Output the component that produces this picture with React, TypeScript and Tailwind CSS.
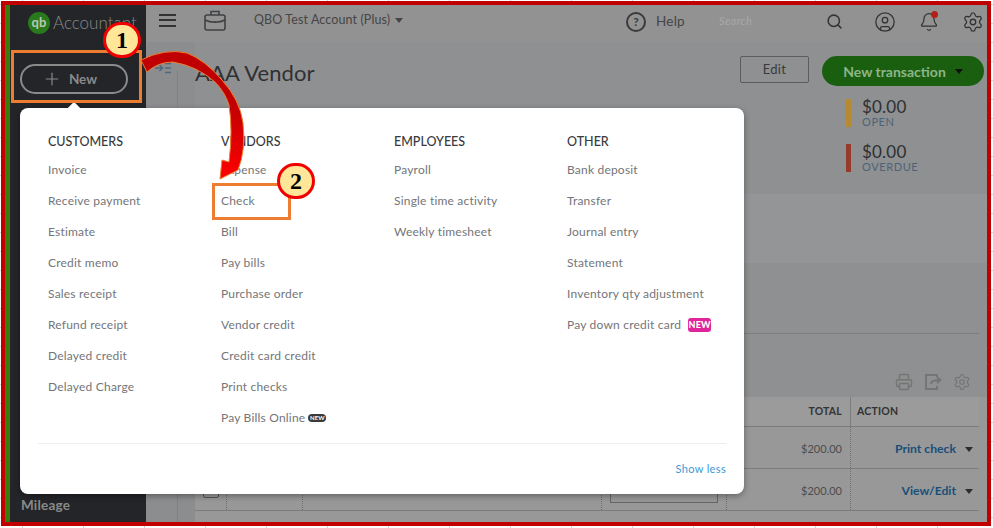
import { CircleUser, Bell, Printer, Settings, Search, Plus } from "lucide-react"

const columns = [
    {
        title: "CUSTOMERS",
        items: ["Invoice", "Receive payment", "Estimate", "Credit memo", "Sales receipt", "Refund receipt", "Delayed credit", "Delayed Charge"],
    },
    {
        title: "VENDORS",
        items: ["Expense", "Check", "Bill", "Pay bills", "Purchase order", "Vendor credit", "Credit card credit", "Print checks", "Pay Bills Online"],
    },
    {
        title: "EMPLOYEES",
        items: ["Payroll", "Single time activity", "Weekly timesheet"],
    },
    {
        title: "OTHER",
        items: ["Bank deposit", "Transfer", "Journal entry", "Statement", "Inventory qty adjustment", "Pay down credit card"],
    },
]

function Caret({ className }: { className: string }) {
    return <span className={`inline-block w-0 h-0 border-x-[4px] border-x-transparent border-t-[5px] ${className}`} />
}

function Callout({ label, className }: { label: string; className: string }) {
    return (
        <div className={`absolute flex items-center justify-center rounded-full border-[3px] border-[#f00000] bg-[#ffe699] text-black font-bold text-[24px] font-['Liberation_Serif',serif] ${className}`}>
            {label}
        </div>
    )
}

function Header() {
    return (
        <header className="h-[37px] pb-[4px] bg-[#929292] flex items-center text-[#454545] shrink-0 whitespace-nowrap">
            <div className="ml-[13px] -mt-[3px] w-[17px] flex flex-col gap-[3.5px]">
                <span className="h-[2px] bg-[#333]" />
                <span className="h-[2px] bg-[#333]" />
                <span className="h-[2px] bg-[#333]" />
            </div>
            <svg className="ml-[28px] -mt-[2px]" width="22" height="21" viewBox="0 0 22 21" fill="none" stroke="#3f4144" strokeWidth="1.6">
                <rect x="1" y="5" width="20" height="15" rx="2" />
                <path d="M7 5V1.5h8V5M1 10c5 3 15 3 20 0M11 11v2" />
            </svg>
            <span className="ml-[28px] -mt-[3px] w-[136px] text-[12.5px] tracking-[0.1px]">QBO Test Account (Plus)</span>
            <Caret className="ml-[5px] -mt-[3px] border-t-[#454545]" />
            <div className="ml-[223px] w-[20px] h-[20px] rounded-full border-2 border-[#3a3a3a] flex items-center justify-center text-[12px] font-bold text-[#3a3a3a]">?</div>
            <span className="ml-[10px] w-[28px] text-[13.5px] tracking-[0.2px]">Help</span>
            <span className="ml-[35px] w-[34px] text-[11px] italic text-[#a8a8a8] tracking-[0.4px]">Search</span>
            <Search className="ml-[73px] text-[#333]" size={17} strokeWidth={2.2} />
            <CircleUser className="ml-[31px] text-[#333]" size={22} strokeWidth={1.4} />
            <div className="relative ml-[23px]">
                <Bell className="text-[#333]" size={20} strokeWidth={1.5} />
                <span className="absolute -top-[1px] right-[1px] w-[7px] h-[7px] rounded-full bg-[#b3201a]" />
            </div>
            <Settings className="ml-[23px] text-[#333]" size={22} strokeWidth={1.4} />
        </header>
    )
}

function Balance({ amount, label, barColor }: { amount: string; label: string; barColor: string }) {
    return (
        <div className="flex gap-[11px] h-[28px]">
            <span className={`w-[5px] h-[28px] ${barColor}`} />
            <div className="-mt-[2px] flex flex-col">
                <span className="text-[17px] leading-[20px] text-[#2e2f31] tracking-[0.2px]">{amount}</span>
                <span className="-mt-[1px] text-[11px] leading-[11px] text-[#4b6479] tracking-[0.6px]">{label}</span>
            </div>
        </div>
    )
}

function TableRow({ action, last }: { action: string; last?: boolean }) {
    const cell = "h-full border-r border-dotted border-[#6f6f6f] flex items-center justify-center"
    return (
        <div className="h-[42px] flex border-b border-[#7c7c7c] text-[#4c4c4c]">
            <div className={`w-[32px] ${cell}`}>
                <span className="w-[16px] h-[16px] border border-[#555] rounded-[2px]" />
            </div>
            <div className={`w-[76px] ${cell}`} />
            <div className={`w-[299px] ${cell}`} />
            <div className={`w-[125px] ${cell}`}>
                {last && <span className="w-[108px] h-[26px] border border-[#666]" />}
            </div>
            <div className="flex-1 pt-[3px] flex items-center justify-end pr-[8px] text-[11px] border-r border-dotted border-[#6f6f6f]">$200.00</div>
            <div className="w-[128px] pt-[3px] flex items-center justify-end pr-[6px] gap-[9px] text-[12.2px] font-bold text-[#174f78]">
                {action}
                <Caret className="border-t-[#2c2c2c]" />
            </div>
        </div>
    )
}

function PageBody() {
    return (
        <div className="flex-1 flex min-h-0 bg-[#8f9091]">
            <div className="w-[49px] shrink-0 bg-[#8c8d8f] pt-[20px]">
                <svg className="ml-[9px]" width="16" height="12" viewBox="0 0 16 12" fill="none" stroke="#4d6980" strokeWidth="1.6">
                    <path d="M0 6h7M4.5 3L7.5 6 4.5 9M10 1.5h6M10 6h6M10 10.5h6" />
                </svg>
                <span className="block ml-[31px] -mt-[4px] w-px h-[460px] bg-[#80818a]" />
            </div>
            <div className="flex-1 flex flex-col min-w-0">
                <div className="h-[152px] pt-[14px] pr-[3px] flex justify-between">
                    <h1 className="-mt-[1px] text-[22px] leading-[36px] tracking-[0.1px] text-[#2f3033]">AAA Vendor</h1>
                    <div className="flex gap-[13px] items-start">
                        <div className="w-[69px] h-[27px] border border-[#5c5c5c] rounded-[2px] flex items-center justify-center text-[13px] text-[#3a3a3a] tracking-[0.3px]">Edit</div>
                        <div className="w-[162px]">
                            <div className="h-[30px] rounded-full bg-[#1a5f10] flex items-center justify-center gap-[9px] text-[14px] font-bold text-[#8db588]">
                                New transaction
                                <Caret className="border-t-[#111]" />
                            </div>
                            <div className="ml-[24px] mt-[13px] flex flex-col gap-[17px]">
                                <Balance amount="$0.00" label="OPEN" barColor="bg-[#b58a33]" />
                                <Balance amount="$0.00" label="OVERDUE" barColor="bg-[#963a2a]" />
                            </div>
                        </div>
                    </div>
                </div>
                <div className="h-[69px] bg-[#949596]" />
                <div className="h-[71px] border-b border-[#7d7e7f] mr-[8px]" />
                <div className="h-[63px] flex items-end justify-end gap-[11px] pb-[6px] pr-[16px] text-[#757575]">
                    <Printer size={18} strokeWidth={2} />
                    <svg width="18" height="18" viewBox="0 0 18 18" fill="none" stroke="#757575" strokeWidth="2">
                        <path d="M13 13v3H2V2h11v2M7 11c0-3 3-4 9-4M13 4l3.5 3L13 10" />
                    </svg>
                    <Settings size={18} strokeWidth={1.6} />
                </div>
                <div className="flex-1 bg-[#989898] pr-[8px]">
                    <div className="h-[30px] flex border-b border-[#7c7c7c] bg-[#9b9b9b] text-[10.5px] font-bold text-[#333]">
                        <div className="flex-1 flex items-center justify-end pr-[8px] border-r border-[#7c7c7c] tracking-[0.2px]">TOTAL</div>
                        <div className="w-[128px] flex items-center pl-[6px] tracking-[0.2px]">ACTION</div>
                    </div>
                    <TableRow action="Print check" />
                    <TableRow action="View/Edit" last />
                </div>
            </div>
        </div>
    )
}

function NewMenu() {
    return (
        <div className="absolute left-[15px] top-[103px] w-[724px] h-[386px] bg-white rounded-[8px] shadow-[0_2px_6px_rgba(0,0,0,0.35)] text-[#747579]">
            <span className="absolute left-[49px] -top-[4px] w-[10px] h-[10px] bg-white rotate-45 rounded-[2px]" />
            <div className="flex h-[335px] pl-[28px] pt-[25px]">
                {columns.map((col) => (
                    <div key={col.title} className="w-[173px]">
                        <h3 className="h-[18px] leading-[18px] text-[12.5px] font-medium text-[#393a3d]">{col.title}</h3>
                        <ul className="mt-[3px]">
                            {col.items.map((item) => (
                                <li key={item} className="h-[31px] flex items-center text-[12px] tracking-[0.2px]">
                                    {item}
                                    {item === "Pay down credit card" && (
                                        <span className="ml-[7px] w-[23px] h-[14px] rounded-[3px] bg-[#e0249a] text-white text-[9px] font-black flex items-center justify-center">NEW</span>
                                    )}
                                    {item === "Pay Bills Online" && (
                                        <span className="ml-[3px] w-[18px] h-[8px] rounded-full bg-[#393a3d] text-white text-[6px] font-bold flex items-center justify-center">NEW</span>
                                    )}
                                </li>
                            ))}
                        </ul>
                    </div>
                ))}
            </div>
            <div className="mx-[18px] border-t border-[#eeeeee] flex justify-end pt-[18px]">
                <span className="text-[11px] leading-[14px] text-[#3d9ad6] tracking-[0.35px]">Show less</span>
            </div>
        </div>
    )
}

function Annotations() {
    return (
        <>
            <div className="absolute left-[6px] top-[45px] w-[131px] h-[53px] border-[3px] border-[#ed7d31]" />
            <div className="absolute left-[207px] top-[178px] w-[79px] h-[37px] border-[3px] border-[#ed7d31]" />
            <svg className="absolute left-0 top-0" width="982" height="517" viewBox="5 5 982 517" fill="none">
                <defs>
                    <linearGradient id="arrowFill" x1="0" y1="0" x2="0" y2="1">
                        <stop offset="0.4" stopColor="#c00000" />
                        <stop offset="1" stopColor="#ff0000" />
                    </linearGradient>
                </defs>
                <path
                    d="M141 60Q165 48 187 53Q205 60 222 80Q240 100 243 123Q246 150 238 170L220 179L222 160L229 162Q233 130 229 105Q225 92 215 82Q197 66 173 62Q158 62 147 72Z"
                    fill="url(#arrowFill)"
                    stroke="#ed7d31"
                    strokeWidth="1"
                />
            </svg>
            <Callout label="1" className="left-[98px] top-[17px] w-[38px] h-[36px]" />
            <Callout label="2" className="left-[272px] top-[158px] w-[38px] h-[36px]" />
        </>
    )
}

export default function App() {
    return (
        <div className="w-[993px] h-[528px] bg-white bg-[linear-gradient(to_right,#d4d4d4_1px,transparent_1px),linear-gradient(to_bottom,#d4d4d4_1px,transparent_1px)] bg-[size:61px_19px] bg-[position:22px_4px] pt-px pl-px font-['Lato',sans-serif]">
            <div className="relative w-[990px] h-[525px] box-border border-4 border-[#c00000]">
                <div className="flex h-full overflow-hidden">
                    <div className="w-[5px] shrink-0 bg-[#3c7a0c]" />
                    <aside className="w-[136px] shrink-0 bg-[#232528] flex flex-col text-[#8a8a8a]">
                        <div className="h-[44px] pt-[7px] pl-[18px] flex items-start">
                            <span className="w-[22px] h-[22px] rounded-full bg-[#2a7a1d] flex items-center justify-center text-[13px] font-bold text-[#b8c9b5]">qb</span>
                            <span className="ml-[3px] text-[17px] leading-[22px] font-light">Accountant</span>
                        </div>
                        <div className="ml-[10px] w-[108px] h-[30px] mt-[15px] rounded-full border-2 border-[#8a8a8a] flex items-center justify-center gap-[7px] pr-[9px] text-[13.5px] font-bold">
                            <Plus size={20} strokeWidth={1.4} />
                            New
                        </div>
                        <div className="mt-auto pl-[11px] pb-[7px] text-[13.5px] font-bold tracking-[0.2px]">Mileage</div>
                    </aside>
                    <main className="flex-1 flex flex-col min-w-0">
                        <Header />
                        <PageBody />
                    </main>
                </div>
                <NewMenu />
                <Annotations />
            </div>
        </div>
    )
}
